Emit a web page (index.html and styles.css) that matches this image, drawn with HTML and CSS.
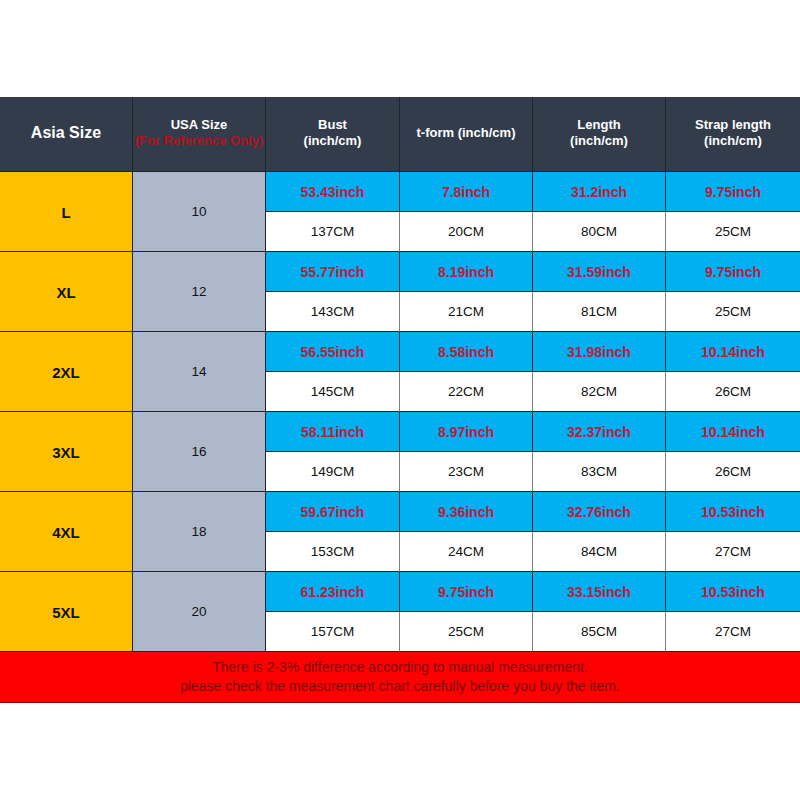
FILE: index.html
```html
<!DOCTYPE html>
<html>
<head>
<meta charset="utf-8">
<link rel="stylesheet" href="styles.css">
</head>
<body>
<div class="page">
  <div class="chart">
    <div class="hd big">Asia Size</div>
    <div class="hd">USA Size<span class="ref">(For Reference Only)</span></div>
    <div class="hd">Bust<br>(inch/cm)</div>
    <div class="hd">t-form (inch/cm)</div>
    <div class="hd">Length<br>(inch/cm)</div>
    <div class="hd">Strap length<br>(inch/cm)</div>

    <div class="asia">L</div><div class="usa">10</div>
    <div class="inch">53.43inch</div><div class="inch">7.8inch</div><div class="inch">31.2inch</div><div class="inch last">9.75inch</div>
    <div class="cm">137CM</div><div class="cm">20CM</div><div class="cm">80CM</div><div class="cm last">25CM</div>

    <div class="asia">XL</div><div class="usa">12</div>
    <div class="inch">55.77inch</div><div class="inch">8.19inch</div><div class="inch">31.59inch</div><div class="inch last">9.75inch</div>
    <div class="cm">143CM</div><div class="cm">21CM</div><div class="cm">81CM</div><div class="cm last">25CM</div>

    <div class="asia">2XL</div><div class="usa">14</div>
    <div class="inch">56.55inch</div><div class="inch">8.58inch</div><div class="inch">31.98inch</div><div class="inch last">10.14inch</div>
    <div class="cm">145CM</div><div class="cm">22CM</div><div class="cm">82CM</div><div class="cm last">26CM</div>

    <div class="asia">3XL</div><div class="usa">16</div>
    <div class="inch">58.11inch</div><div class="inch">8.97inch</div><div class="inch">32.37inch</div><div class="inch last">10.14inch</div>
    <div class="cm">149CM</div><div class="cm">23CM</div><div class="cm">83CM</div><div class="cm last">26CM</div>

    <div class="asia">4XL</div><div class="usa">18</div>
    <div class="inch">59.67inch</div><div class="inch">9.36inch</div><div class="inch">32.76inch</div><div class="inch last">10.53inch</div>
    <div class="cm">153CM</div><div class="cm">24CM</div><div class="cm">84CM</div><div class="cm last">27CM</div>

    <div class="asia">5XL</div><div class="usa">20</div>
    <div class="inch">61.23inch</div><div class="inch">9.75inch</div><div class="inch">33.15inch</div><div class="inch last">10.53inch</div>
    <div class="cm">157CM</div><div class="cm">25CM</div><div class="cm">85CM</div><div class="cm last">27CM</div>

    <div class="note">There is 2-3% difference according to manual measurement.<br>please check the measurement chart carefully before you buy the item.</div>
  </div>
</div>
</body>
</html>
```

FILE: styles.css
```css
html, body {
  margin: 0;
  padding: 0;
  background: #ffffff;
}
.page {
  width: 800px;
  height: 800px;
  padding-top: 97px;
  box-sizing: border-box;
  font-family: "Liberation Sans", Arial, sans-serif;
}
.chart {
  display: grid;
  grid-template-columns: 133px 133px 134px 133px 133px 134px;
  grid-template-rows: 75px repeat(12, 40px) 51px;
  width: 800px;
}
.chart > div {
  box-sizing: border-box;
  display: flex;
  flex-direction: column;
  align-items: center;
  justify-content: center;
  text-align: center;
  border-right: 1px solid #1f2530;
  border-bottom: 1px solid #1f2530;
}
.chart > div.last {
  border-right: none;
}
.hd {
  background: #323c4b;
  color: #ffffff;
  font-weight: bold;
  font-size: 13px;
  line-height: 16px;
  padding-bottom: 2px;
}
.hd:nth-child(6) {
  border-right: none;
}
.hd.big {
  font-size: 16px;
}
.ref {
  color: #b3121b;
  font-weight: bold;
  font-size: 13px;
  line-height: 16px;
  white-space: nowrap;
}
.asia {
  grid-row: span 2;
  background: #ffc000;
  color: #111111;
  font-weight: bold;
  font-size: 15px;
  padding-top: 2px;
}
.usa {
  grid-row: span 2;
  background: #adb9ca;
  color: #111111;
  font-size: 13.5px;
}
.inch {
  background: #00b0f0;
  color: #b51f42;
  font-weight: bold;
  font-size: 14px;
}
.cm {
  background: #ffffff;
  color: #111111;
  font-size: 13.5px;
  border-right-color: #7f7f7f !important;
}
.note {
  grid-column: 1 / -1;
  background: #ff0000;
  color: #7a0505;
  font-size: 14px;
  line-height: 19px;
  border-right: none !important;
  border-bottom: 1px solid #8a0a0a !important;
}
```
